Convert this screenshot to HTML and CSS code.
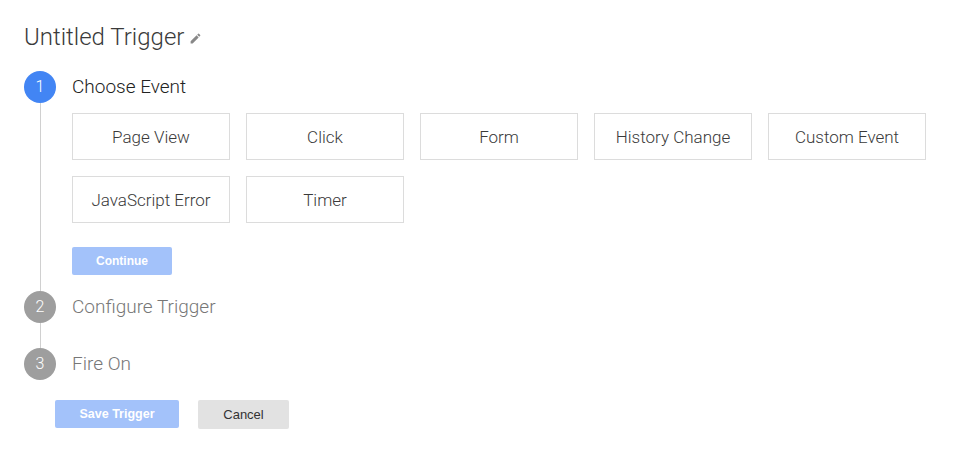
FILE: index.html
```html
<!DOCTYPE html>
<html>
<head>
<meta charset="utf-8">
<link rel="stylesheet" href="styles.css">
</head>
<body>
<div class="page">
  <h1 class="title">Untitled Trigger
    <svg class="pencil" width="13" height="13" viewBox="0 0 24 24"><path d="M3 17.25V21h3.75L17.81 9.94l-3.75-3.75L3 17.25zM20.71 7.04a1 1 0 0 0 0-1.41l-2.34-2.34a1 1 0 0 0-1.41 0l-1.830 1.83 3.75 3.75 1.83-1.83z" fill="#888"/></svg>
  </h1>

  <div class="step step-1">
    <div class="rail"><div class="circle active">1</div><div class="line"></div></div>
    <div class="content">
      <div class="step-label">Choose Event</div>
      <div class="events">
        <div class="event">Page View</div>
        <div class="event">Click</div>
        <div class="event">Form</div>
        <div class="event">History Change</div>
        <div class="event">Custom Event</div>
        <div class="event">JavaScript Error</div>
        <div class="event">Timer</div>
      </div>
      <button class="btn primary continue">Continue</button>
    </div>
  </div>

  <div class="step step-2">
    <div class="rail"><div class="circle">2</div><div class="line"></div></div>
    <div class="content">
      <div class="step-label muted">Configure Trigger</div>
    </div>
  </div>

  <div class="step step-3">
    <div class="rail"><div class="circle">3</div></div>
    <div class="content">
      <div class="step-label muted">Fire On</div>
    </div>
  </div>

  <div class="actions">
    <button class="btn primary save">Save Trigger</button>
    <button class="btn cancel">Cancel</button>
  </div>
</div>
</body>
</html>
```
FILE: styles.css
```css
html, body { margin: 0; padding: 0; background: #fff; }
body { font-family: Roboto, "Liberation Sans", sans-serif; }
.page { padding: 23px 24px 0 24px; }
.title {
  margin: 0;
  font-size: 24px;
  font-weight: 300;
  line-height: 28px;
  height: 28px;
  color: #3a3a3a;
  display: flex;
  align-items: center;
  gap: 5px;
}
.pencil { margin-top: 2px; }
.step { display: flex; }
.step-1 { margin-top: 20px; }
.rail { width: 32px; display: flex; flex-direction: column; align-items: center; }
.circle {
  width: 32px; height: 32px; border-radius: 50%;
  background: #9e9e9e; color: #fff;
  font-size: 16px; font-weight: 300; line-height: 32px; text-align: center;
  flex: none;
}
.circle.active { background: #4285f4; }
.line { flex: 1; width: 1px; background: #d0d0d0; }
.content { margin-left: 16px; flex: 1; }
.step-label { font-size: 19px; font-weight: 300; line-height: 32px; height: 32px; color: #222; }
.step-label.muted { color: #777; }
.events {
  margin-top: 10px;
  display: grid;
  grid-template-columns: repeat(5, 158px);
  gap: 16px;
}
.event {
  box-sizing: border-box;
  height: 47px;
  border: 1px solid #dcdcdc;
  display: flex; align-items: center; justify-content: center;
  font-size: 17px; font-weight: 300; color: #3a3a3a;
}
.btn {
  border: none; border-radius: 2px;
  font-family: "Liberation Sans", Arial, sans-serif;
  font-size: 13px; height: 28px; padding: 0;
  display: block;
}
.primary { background: #a3c2fa; color: #fff; font-weight: bold; }
.continue { width: 100px; margin-top: 24px; margin-bottom: 16px; font-size: 12px; }
.step-2 .content { padding-bottom: 25px; }
.actions { display: flex; gap: 19px; margin-top: 20px; margin-left: 31px; }
.save { width: 124px; font-size: 12.5px; }
.cancel { width: 91px; height: 29px; background: #e2e2e2; color: #333; }
```
